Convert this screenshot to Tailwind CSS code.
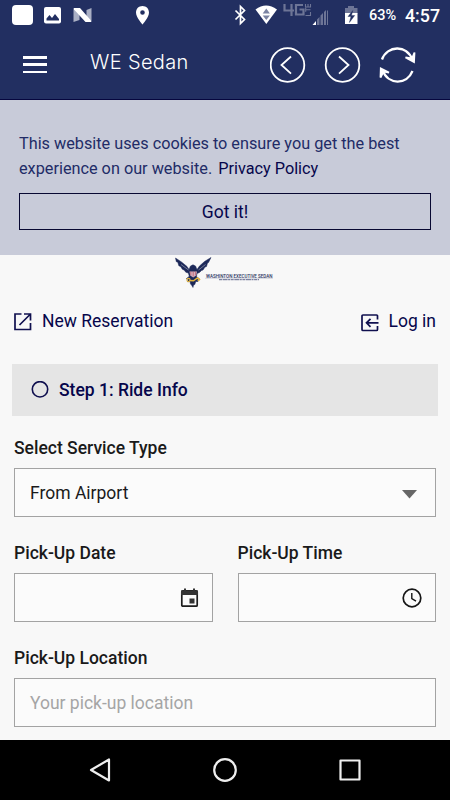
<!DOCTYPE html>
<html lang="en">
<head>
<meta charset="utf-8">
<meta name="viewport" content="width=device-width">
<title>WE Sedan</title>
<script src="https://cdn.jsdelivr.net/npm/@tailwindcss/browser@4"></script>
</head>
<body class="w-[450px] h-[800px] overflow-hidden flex flex-col bg-[#f8f8f8] font-[Roboto,sans-serif] text-[17.500px] leading-[24px] text-[#06064b]">
<header class="h-[100px] shrink-0 bg-[#222f61] border-b border-[#06063e] text-white flex flex-col">
  <!-- status bar -->
  <div class="h-[30px] flex items-center">
    <svg class="w-[225px] h-[30px]" viewBox="0 0 225 30">
      <rect x="12" y="5" width="21" height="20" rx="4" fill="#fff"/>
      <rect x="44" y="7" width="17" height="16.500" rx="2" fill="#fff"/>
      <path d="M46.500 20.500v-2l3-3.500 2.500 3 3-4 4 5v1.500z" fill="#222f61"/>
      <path d="M73.500 8l6 3v9l-6 2zM91.500 8v14l-5-2v-10z" fill="#a9afc4"/>
      <path d="M74 8h6l11 12.500v1.500h-5.500L74 9.500z" fill="#fff"/>
      <path fill-rule="evenodd" d="M142.500 6c-3.800 0-6.500 2.800-6.500 6.500 0 4.800 6.500 12 6.500 12s6.500-7.200 6.500-12c0-3.700-2.700-6.500-6.500-6.500zm0 4.200a2.300 2.300 0 1 1 0 4.600 2.300 2.300 0 0 1 0-4.600z" fill="#fff"/>
    </svg>
    <svg class="w-[140px] h-[30px]" viewBox="225 0 140 30">
      <path d="M235.500 10.500l9 9-4 4V6.500l4 4-9 9" fill="none" stroke="#fff" stroke-width="1.700"/>
      <path d="M255.500 9.500Q266 1.500 277 9.500L266.300 24z" fill="#fff"/>
      <path d="M262.700 13.500l3.600-5 3.600 5zM262.700 15.500h7.200l-3.600 4.500z" fill="#7a83a2"/>
      <path d="M284.500 4v6.500h9.500M291.500 4v12M303 5h-7v9.500h7.500v-5h-4" fill="none" stroke="#6d7596" stroke-width="2.200"/>
      <path d="M305.500 15.500h5v-3.500M305.500 9.800h5M305.700 7.800v4M305.500 4v3h5V4M308 4v3" fill="none" stroke="#6d7596" stroke-width="1.100"/>
      <path d="M312.500 25l3.500-4v4z" fill="#fff"/>
      <path d="M317 19.500l2.500-2.500v8H317zM320.500 15.500l2.500-2.500v12h-2.500zM324 12l2-2v15h-2z" fill="#6d7596"/><path d="M327 10.500h1V25h-1z" fill="#6d7596"/>
      <path d="M345 8h3V6h6v2h3.500v6H345z" fill="#6d7596"/>
      <path d="M345 13h12.500v11H345z" fill="#fff"/>
      <path d="M352.800 10.500l-4.800 6h3l-1.600 6 5.300-7h-3.200z" fill="#222f61" stroke="#222f61" stroke-width=".4"/>
    </svg>
    <span class="w-[35px] pl-[4px] pt-[2px] text-[14.500px] font-medium">63%</span>
    <span class="pl-[5px] pt-[2px] text-[17.800px] font-medium">4:57</span>
  </div>
  <div class="h-[69px] flex items-center pl-[23px]">
    <div class="w-[24px] h-[17px] flex flex-col justify-between shrink-0">
      <div class="h-[2.500px] bg-white"></div><div class="h-[2.500px] bg-white"></div><div class="h-[2.500px] bg-white"></div>
    </div>
    <h1 class="pl-[43px] w-[223px] shrink-0 font-[Inter,sans-serif] font-light text-[20px] tracking-[0.350px] -mt-[5px]">WE Sedan</h1>
    <svg class="w-[150px] h-[40px] shrink-0" viewBox="270 45 150 40" fill="none" stroke="#fff" stroke-width="1.800">
      <circle cx="287.500" cy="65" r="16.800"/><path d="M291 56.500L281.500 65l9.500 8.700"/>
      <circle cx="342.500" cy="65" r="16.800"/><path d="M339 56.500l9.500 8.500-9.500 8.700"/>
      <path d="M382 59.500C387 45.500 407 44 412.500 60" stroke-width="2.300"/>
      <path d="M412.500 71C407 85 388 85.500 382.500 70" stroke-width="2.300"/>
      <path d="M405.500 57.500l8.500 4.500.5-9.500-2.500 6z" fill="#fff"/>
      <path d="M389 72.500L380.800 68.500 380.500 77.500 383.500 71.500z" fill="#fff"/>
    </svg>
  </div>
</header>
<section class="h-[155px] shrink-0 bg-[#c8cbd9] px-[19px] pt-[31px]">
  <p class="whitespace-nowrap text-[16.250px] leading-[25px] text-[#222c67]">This website uses cookies to ensure you get the best<br>experience on our website. <a class="text-[#06064b] pl-[2px]">Privacy Policy</a></p>
  <button class="block mt-[12px] w-[412px] h-[37px] border border-[#080832] text-center">Got it!</button>
</section>
<main class="h-[485px] shrink-0 px-[14px] text-[#1a1a1a]">
  <div class="h-[45px] flex pl-[161px] pt-[2px]">
    <svg class="w-[110px] h-[34px] overflow-visible" viewBox="175 257 110 34">
      <path d="M175.500 258l6 4 5.500 4.500 2 3 1.500-3.500 2.500-1.200 2.500 1.200 1.500 3.500 2.500-3.500 5-4.500 6.500-4-2.500 5-1 .5-1 3.500-1.500.5-2 3-1.500.5-2 2-2.500 1-.5 3 3 2.500-2 .5.500 2-2.200 0-1 3-1.300.5-.5 2.500-1.500-2.500-1-1-.5-2.500-2.500.2.800-2.200-2-.8 3-2.500-1-3.200-2.500-.8-1.500-2-2-1-1.500-2.500-2-1-1-3.500-1.500-.5z" fill="#1c2858" stroke="#1c2858" stroke-width=".5"/>
      <path d="M181 264.500l7.500 5.500M205.500 264.500l-7 5.500" stroke="#f8f8f8" stroke-width=".4"/>
      <path d="M189.500 271.500h7.500l-.8 4-3 2-3-2z" fill="#d3b3c1"/><path d="M190.800 271.500v4M193.200 271.500v5M195.600 271.500v4" stroke="#bd4b5e" stroke-width=".7"/>
      <path d="M189.500 280.500l4 .3 4-2.800 2 1.500-1.500 1.500" fill="none" stroke="#e2b43e" stroke-width="1.500"/><circle cx="188.500" cy="280" r="1.600" fill="none" stroke="#e2b43e" stroke-width="1.100"/>
      <text x="206" y="277.500" font-family="Roboto, sans-serif" font-size="5" font-weight="500" fill="#28305e" textLength="66.500" lengthAdjust="spacingAndGlyphs">WASHINTON EXECUTIVE SEDAN</text>
      <path d="M205 278.300h68" stroke="#9a9fb8" stroke-width=".4"/>
      <path d="M219 279.700h40" stroke="#50577f" stroke-width=".9" stroke-dasharray="3 .6 5 .5 2 .6"/>
    </svg>
  </div>
  <nav class="h-[64px] pt-[9px] flex items-start text-[#06064b]">
    <svg class="w-[18px] h-[18px] mt-[4px] shrink-0" viewBox="0 0 18 18" fill="none" stroke="#10104f" stroke-width="1.700"><path d="M7.500 1H1v15.500h15.500V10M10 1h6.500v6.500M16 1.500L5.500 12"/></svg>
    <a class="pl-[10px]">New Reservation</a>
    <svg class="w-[18px] h-[18px] mt-[5px] ml-auto shrink-0" viewBox="0 0 18 18" fill="none" stroke="#10104f" stroke-width="1.700"><path d="M16.500 5.500V2q0-1-1-1H2Q1 1 1 2v13.500q0 1 1 1h13.500q1 0 1-1V12M17.500 8.800H6M9.500 4.800l-4 4 4 4"/></svg>
    <a class="pl-[10px]">Log in</a>
  </nav>
  <div class="-mx-[2px] w-[426px] h-[52px] bg-[#e5e5e5] flex items-center pl-[19px] text-[#06064b]">
    <svg class="w-[18px] h-[18px]" viewBox="0 0 18 18"><circle cx="9" cy="8.300" r="7.700" fill="none" stroke="#10104f" stroke-width="1.600"/></svg>
    <h2 class="pl-[10px] font-medium">Step 1: Ride Info</h2>
  </div>
  <label class="block h-[52px] pt-[20px] font-medium">Select Service Type</label>
  <div class="h-[49px] w-[422px] border border-[#a3a3a3] bg-[#fbfbfb] flex items-center justify-between pl-[15px] pr-[18px]">
    <span>From Airport</span>
    <svg class="w-[15px] h-[9px] mt-[3px]" viewBox="0 0 15 9"><path d="M0 0h15L7.500 8.500z" fill="#666"/></svg>
  </div>
  <div class="flex gap-[25px] w-[422px]">
    <div class="w-[198.500px]"><label class="block h-[56px] pt-[24px] font-medium">Pick-Up Date</label>
      <div class="h-[49px] border border-[#a3a3a3] bg-[#fbfbfb] flex items-center justify-end pr-[13px]">
        <svg class="w-[19px] h-[20px]" viewBox="0 0 19 20"><rect x="1.800" y="2.800" width="15.400" height="15.400" rx="1" fill="none" stroke="#1d1d1d" stroke-width="1.700"/><path d="M1 2.500h17V7H1zM4 .5h2v3H4zM13 .5h2v3h-2zM9.500 10.500h5v5h-5z" fill="#333"/></svg>
      </div>
    </div>
    <div class="w-[198.500px]"><label class="block h-[56px] pt-[24px] font-medium">Pick-Up Time</label>
      <div class="h-[49px] border border-[#a3a3a3] bg-[#fbfbfb] flex items-center justify-end pr-[13px]">
        <svg class="w-[20px] h-[20px]" viewBox="0 0 20 20" fill="none" stroke="#161616"><circle cx="10" cy="10" r="8.800" stroke-width="1.700"/><path d="M9.800 5v5.600l4.200 2.500" stroke-width="1.400"/></svg>
      </div>
    </div>
  </div>
  <label class="block h-[56px] pt-[24px] font-medium">Pick-Up Location</label>
  <div class="h-[49px] w-[422px] border border-[#a3a3a3] bg-[#fbfbfb] flex items-center pl-[15px] text-[#a5a5a5]">Your pick-up location</div>
</main>
<footer class="h-[60px] shrink-0 bg-black flex items-center justify-center">
  <svg class="w-[275px] h-[30px]" viewBox="88 755 275 30" fill="none" stroke="#eee" stroke-width="2.200" stroke-linejoin="round"><path d="M109 759.500v21L91 770z"/><circle cx="225" cy="770" r="10.800"/><rect x="340.500" y="760.500" width="19" height="19"/></svg>
</footer>
</body>
</html>
